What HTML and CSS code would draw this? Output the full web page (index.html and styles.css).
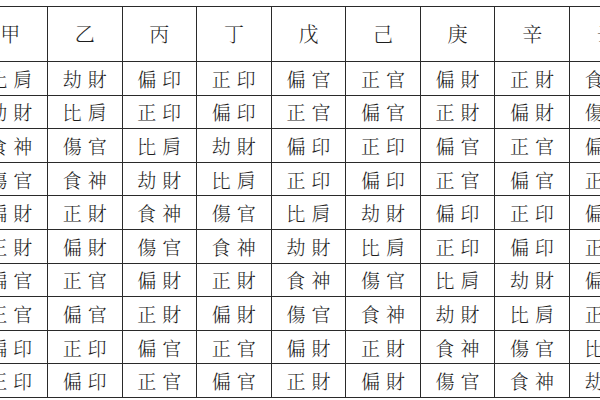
FILE: index.html
```html
<!DOCTYPE html>
<html lang="zh-Hant">
<head>
<meta charset="utf-8">
<link rel="stylesheet" href="styles.css">
</head>
<body>
<table class="gods">
<colgroup>
<col class="c"><col class="c"><col class="c"><col class="c"><col class="c"><col class="c"><col class="c"><col class="c"><col class="c"><col class="c">
</colgroup>
<thead>
<tr class="head"><th>甲</th><th>乙</th><th>丙</th><th>丁</th><th>戊</th><th>己</th><th>庚</th><th>辛</th><th>壬</th><th>癸</th></tr>
</thead>
<tbody>
<tr><td>比肩</td><td>劫財</td><td>偏印</td><td>正印</td><td>偏官</td><td>正官</td><td>偏財</td><td>正財</td><td>食神</td><td>傷官</td></tr>
<tr><td>劫財</td><td>比肩</td><td>正印</td><td>偏印</td><td>正官</td><td>偏官</td><td>正財</td><td>偏財</td><td>傷官</td><td>食神</td></tr>
<tr><td>食神</td><td>傷官</td><td>比肩</td><td>劫財</td><td>偏印</td><td>正印</td><td>偏官</td><td>正官</td><td>偏財</td><td>正財</td></tr>
<tr><td>傷官</td><td>食神</td><td>劫財</td><td>比肩</td><td>正印</td><td>偏印</td><td>正官</td><td>偏官</td><td>正財</td><td>偏財</td></tr>
<tr><td>偏財</td><td>正財</td><td>食神</td><td>傷官</td><td>比肩</td><td>劫財</td><td>偏印</td><td>正印</td><td>偏官</td><td>正官</td></tr>
<tr><td>正財</td><td>偏財</td><td>傷官</td><td>食神</td><td>劫財</td><td>比肩</td><td>正印</td><td>偏印</td><td>正官</td><td>偏官</td></tr>
<tr><td>偏官</td><td>正官</td><td>偏財</td><td>正財</td><td>食神</td><td>傷官</td><td>比肩</td><td>劫財</td><td>偏印</td><td>正印</td></tr>
<tr><td>正官</td><td>偏官</td><td>正財</td><td>偏財</td><td>傷官</td><td>食神</td><td>劫財</td><td>比肩</td><td>正印</td><td>偏印</td></tr>
<tr><td>偏印</td><td>正印</td><td>偏官</td><td>正官</td><td>偏財</td><td>正財</td><td>食神</td><td>傷官</td><td>比肩</td><td>劫財</td></tr>
<tr><td>正印</td><td>偏印</td><td>正官</td><td>偏官</td><td>正財</td><td>偏財</td><td>傷官</td><td>食神</td><td>劫財</td><td>比肩</td></tr>
</tbody>
</table>
</body>
</html>
```
FILE: styles.css
```css
html, body {
  margin: 0;
  padding: 0;
  background: #ffffff;
  overflow: hidden;
  width: 600px;
  height: 400px;
}

.gods {
  border-collapse: collapse;
  table-layout: fixed;
  width: 745.7px;
  margin-left: -27.6px;
  margin-top: 6px;
  font-family: "AR PL UKai TW", "AR PL UKai CN", "Noto Serif CJK TC", "Noto Sans CJK TC", serif;
  font-weight: 300;
  color: #1e1e1e;
}

.c {
  width: 74.57px;
}

.gods th,
.gods td {
  border: 1px solid #2a2a2a;
  text-align: center;
  vertical-align: middle;
  padding: 0 0 0 6px;
  font-size: 19px;
  letter-spacing: 6px;
  line-height: 1;
  white-space: nowrap;
}

.gods th {
  font-weight: 300;
  height: 54px;
  font-size: 20px;
  padding-left: 0;
  letter-spacing: 0;
}

.gods td {
  height: 33.6px;
  box-sizing: border-box;
}
```
